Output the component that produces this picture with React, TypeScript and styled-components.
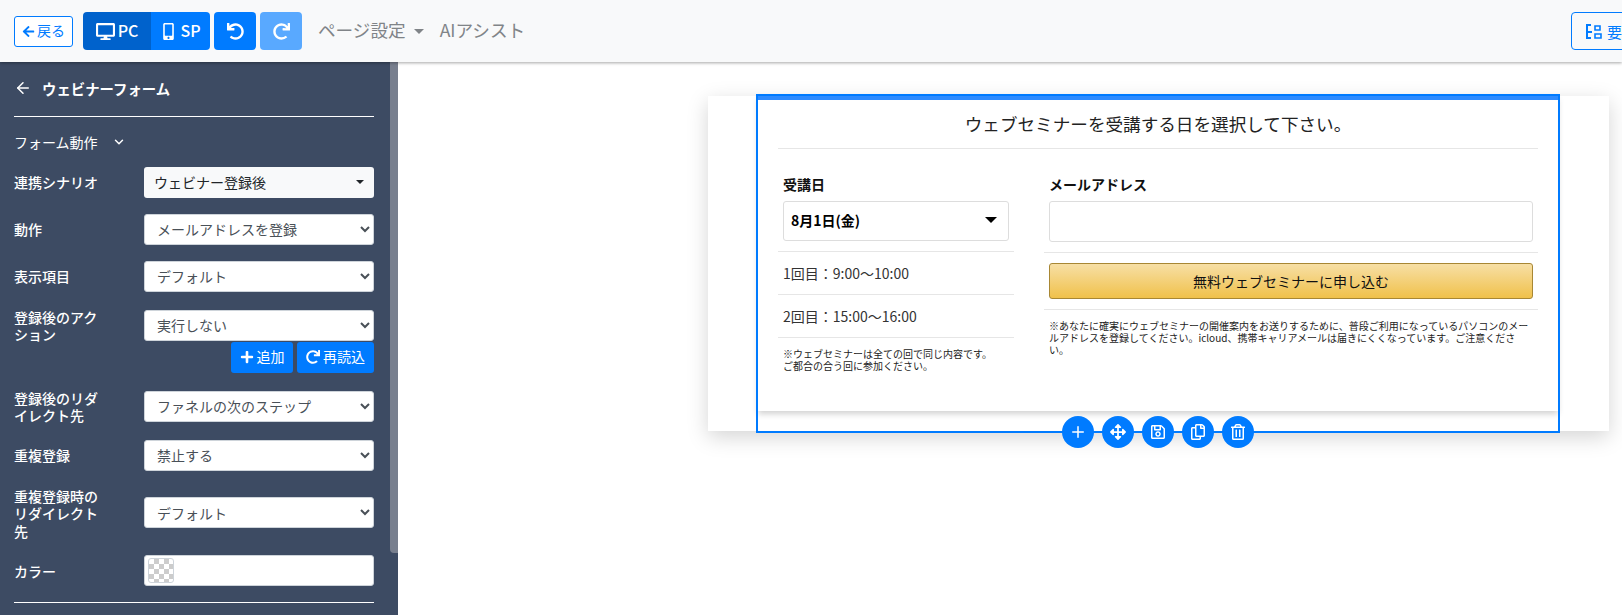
import React from 'react';
import styled, { createGlobalStyle } from 'styled-components';
import { FaArrowLeft, FaArrowsAlt, FaDesktop, FaMobileAlt, FaPlus, FaRedo, FaRegCopy, FaRegSave, FaRegTrashAlt, FaUndo } from 'react-icons/fa';
import { ArrowLeft, ChevronDown, Plus } from 'lucide-react';

const GlobalStyle = createGlobalStyle`
  html, body { margin: 0; padding: 0; height: 615px; overflow: hidden; background: #fff; }
  * { box-sizing: border-box; }
  body, button, select { font-family: "Noto Sans CJK JP", "Noto Sans", sans-serif; }
`;

const Page = styled.div`
  width: 1622px;
  height: 615px;
  overflow: hidden;
  display: flex;
  flex-direction: column;
`;

const Header = styled.header`
  height: 62px;
  flex: none;
  display: flex;
  align-items: center;
  padding-left: 14px;
  background: #f8f9fa;
  box-shadow: 0 1px 3px rgba(0, 0, 0, 0.35);
  position: relative;
  z-index: 2;
`;

const BackButton = styled.button`
  width: 59px;
  height: 31px;
  padding: 0 0 2px;
  display: flex;
  align-items: center;
  justify-content: center;
  gap: 2px;
  background: #fff;
  color: #007bff;
  border: 1px solid #007bff;
  border-radius: 3px;
  font-size: 14px;
  svg { font-size: 13px; margin-top: 2px; }
`;

const DeviceGroup = styled.div`
  display: flex;
  margin-left: 10px;
  height: 38px;
  border-radius: 4px;
  overflow: hidden;
`;

const DeviceButton = styled.button<{ $active?: boolean; $width: number }>`
  width: ${p => p.$width}px;
  padding: 0 0 3px;
  border: 0;
  display: flex;
  align-items: center;
  justify-content: center;
  gap: 3px;
  color: #fff;
  font-size: 16px;
  font-weight: 500;
  background: ${p => (p.$active ? '#0062cc' : '#007bff')};
  svg { font-size: ${p => (p.$active ? 19 : 17)}px; margin-top: 3px; }
`;

const IconButton = styled.button<{ $disabled?: boolean }>`
  width: 42px;
  height: 38px;
  margin-left: 4px;
  padding: 0;
  border: 0;
  border-radius: 4px;
  color: #fff;
  background: ${p => (p.$disabled ? '#59a9ff' : '#007bff')};
  display: flex;
  align-items: center;
  justify-content: center;
  svg { font-size: 17px; }
`;

const NavItem = styled.span<{ $left: number }>`
  margin-left: ${p => p.$left}px;
  padding-bottom: 4px;
  display: flex;
  align-items: center;
  color: #808488;
  font-size: 17.6px;
`;

const NavCaret = styled.i`
  margin: 4px 0 0 8px;
  border-top: 5px solid #808488;
  border-left: 5px solid transparent;
  border-right: 5px solid transparent;
`;

const OutlineButton = styled.button`
  margin-left: auto;
  margin-right: -40px;
  width: 91px;
  height: 38px;
  padding: 0 0 0 13px;
  display: flex;
  align-items: center;
  gap: 5px;
  background: transparent;
  color: #007bff;
  border: 1px solid #007bff;
  border-radius: 4px;
  font-size: 15px;
`;

const Main = styled.div`
  flex: 1;
  display: flex;
  min-height: 0;
`;

const Sidebar = styled.aside`
  width: 398px;
  flex: none;
  padding: 0 24px 0 14px;
  background: #3d4b63;
  color: #fff;
  position: relative;
  overflow: hidden;
`;

const ScrollThumb = styled.div`
  position: absolute;
  top: 0;
  right: 0;
  width: 8px;
  height: 491px;
  background: #787f8e;
  border-radius: 0 0 0 4px;
`;

const PanelTitle = styled.div`
  height: 55px;
  display: flex;
  align-items: center;
  gap: 10px;
  border-bottom: 1px solid #fff;
  font-size: 14.4px;
  font-weight: 700;
  padding-bottom: 2px;
`;

const SectionToggle = styled.div`
  height: 49.7px;
  display: flex;
  align-items: center;
  gap: 14px;
  font-size: 14px;
`;

const Row = styled.div<{ $top?: boolean }>`
  display: flex;
  align-items: ${p => (p.$top ? 'flex-start' : 'center')};
  margin-bottom: 16px;
`;

const FieldLabel = styled.label`
  width: 130px;
  flex: none;
  padding-right: 37px;
  font-size: 14px;
  line-height: 17.5px;
  font-weight: 500;
  transform: translateY(1px);
`;

const Control = styled.div<{ $top?: boolean }>`
  flex: 1;
  min-width: 0;
  padding-top: ${p => (p.$top ? 2 : 0)}px;
`;

const DropButton = styled.button`
  width: 100%;
  height: 31px;
  padding: 0 10px;
  display: flex;
  align-items: center;
  justify-content: space-between;
  background: #f8f9fa;
  border: 0;
  border-radius: 3px;
  color: #212529;
  font-size: 14px;
`;

const DropCaret = styled.i`
  border-top: 4px solid #212529;
  border-left: 4px solid transparent;
  border-right: 4px solid transparent;
`;

const NativeSelect = styled.select`
  display: block;
  width: 100%;
  height: 31px;
  padding: 0 8px;
  background: #fff;
  border: 1px solid #ced4da;
  border-radius: 3px;
  color: #495057;
  font-size: 14px;
`;

const ActionRow = styled.div`
  display: flex;
  justify-content: flex-end;
  gap: 4px;
  margin-top: 1px;
`;

const ActionButton = styled.button<{ $width: number }>`
  width: ${p => p.$width}px;
  height: 31px;
  padding: 0 0 2px;
  border: 0;
  border-radius: 3px;
  display: flex;
  align-items: center;
  justify-content: center;
  gap: 3px;
  background: #007bff;
  color: #fff;
  font-size: 14px;
  svg { font-size: 14px; margin-top: 2px; }
`;

const ColorField = styled.div`
  height: 31px;
  padding: 2px 3px;
  background: #fff;
  border: 1px solid #ced4da;
  border-radius: 3px;
`;

const Swatch = styled.div`
  width: 26px;
  height: 25px;
  border: 1px solid #ced4da;
  border-radius: 3px;
  background: repeating-conic-gradient(#ccc 0 25%, #fff 0 50%) 0 0 / 10px 10px;
`;

const PanelRule = styled.hr`
  margin: 16px 0 0;
  border: 0;
  border-top: 1px solid #fff;
`;

const Canvas = styled.main`
  flex: 1;
  padding: 34px 0 0 310px;
  background: #fff;
`;

const Card = styled.section`
  position: relative;
  width: 901px;
  height: 335px;
  padding: 0 51px 0 50px;
  background: #fff;
  box-shadow: 0 6px 20px rgba(0, 0, 0, 0.17);
`;

const Block = styled.div`
  height: 315px;
  padding: 0 20px;
  border-top: 4px solid #2e8bff;
  background: #fff;
  box-shadow: 0 3px 6px rgba(0, 0, 0, 0.18);
`;

const FormTitle = styled.h2`
  margin: 0;
  height: 49px;
  padding-bottom: 2px;
  border-bottom: 1px solid #e6e6e6;
  display: flex;
  align-items: center;
  justify-content: center;
  color: #222;
  font-size: 17.6px;
  font-weight: 400;
`;

const Columns = styled.div`
  display: grid;
  grid-template-columns: 236px 494px;
  column-gap: 30px;
`;

const FormLabel = styled.div`
  margin: 25px 0 0 5px;
  height: 21px;
  line-height: 21px;
  color: #111;
  font-size: 14px;
  font-weight: 700;
`;

const DateSelect = styled.div`
  margin: 6px 5px 0;
  height: 40px;
  padding: 0 11px 2px 7px;
  display: flex;
  align-items: center;
  justify-content: space-between;
  border: 1px solid #ddd;
  border-radius: 3px;
  color: #000;
  font-size: 14px;
  font-weight: 700;
`;

const DateCaret = styled.i`
  border-top: 6px solid #000;
  border-left: 6px solid transparent;
  border-right: 6px solid transparent;
`;

const SessionRow = styled.div<{ $first?: boolean }>`
  margin-top: ${p => (p.$first ? 10 : 0)}px;
  height: 43px;
  padding-left: 5px;
  display: flex;
  align-items: center;
  border-top: 1px solid #e6e6e6;
  color: #333;
  font-size: 14px;
`;

const Note = styled.p`
  margin: 0;
  padding: 10px 5px 0;
  border-top: 1px solid #e6e6e6;
  color: #222;
  font-size: 10px;
  line-height: 12px;
`;

const EmailInput = styled.div`
  margin: 6px 5px 0;
  height: 41px;
  border: 1px solid #ddd;
  border-radius: 3px;
`;

const ButtonSlot = styled.div`
  margin-top: 10px;
  padding: 10px 5px;
  border-top: 1px solid #e6e6e6;
`;

const GoldButton = styled.button`
  display: block;
  width: 100%;
  height: 36px;
  padding: 0;
  border: 1px solid #a88734;
  border-radius: 3px;
  background: linear-gradient(#f7dfa5, #f0c14b);
  color: #111;
  font-size: 14px;
`;

const SelectionFrame = styled.div`
  position: absolute;
  left: 48px;
  top: -2px;
  width: 804px;
  height: 339px;
  border: 2px solid #007bff;
  pointer-events: none;
`;

const FloatingTools = styled.div`
  position: absolute;
  left: 354px;
  top: 320px;
  display: flex;
  gap: 8px;
`;

const ToolButton = styled.button`
  width: 32px;
  height: 32px;
  padding: 0;
  border: 0;
  border-radius: 50%;
  display: flex;
  align-items: center;
  justify-content: center;
  background: #007bff;
  color: #fff;
  svg { font-size: 16px; }
`;

const selects = [
  { label: '動作', value: 'メールアドレスを登録' },
  { label: '表示項目', value: 'デフォルト' },
];

const TreeIcon = () => (
  <svg width="17" height="17" viewBox="0 0 17 17" fill="none" stroke="currentColor" strokeWidth="2">
    <path d="M2 1v15M1 2h5M2 9h5M1 15h5" />
    <path d="M10 3h5v4h-5zM10 11h6v4h-6z" strokeWidth="1.6" />
  </svg>
);

const Field: React.FC<{ label: string; value: string }> = ({ label, value }) => (
  <Row>
    <FieldLabel>{label}</FieldLabel>
    <Control>
      <NativeSelect defaultValue={value}>
        <option>{value}</option>
      </NativeSelect>
    </Control>
  </Row>
);

export default function App() {
  return (
    <Page>
      <GlobalStyle />
      <Header>
        <BackButton><FaArrowLeft />戻る</BackButton>
        <DeviceGroup>
          <DeviceButton $active $width={68}><FaDesktop />PC</DeviceButton>
          <DeviceButton $width={59}><FaMobileAlt />SP</DeviceButton>
        </DeviceGroup>
        <IconButton><FaUndo /></IconButton>
        <IconButton $disabled><FaRedo /></IconButton>
        <NavItem $left={16}>ページ設定<NavCaret /></NavItem>
        <NavItem $left={16}>AIアシスト</NavItem>
        <OutlineButton><TreeIcon />要素</OutlineButton>
      </Header>
      <Main>
        <Sidebar>
          <ScrollThumb />
          <PanelTitle><ArrowLeft size={18} strokeWidth={2} />ウェビナーフォーム</PanelTitle>
          <SectionToggle>フォーム動作<ChevronDown size={14} strokeWidth={2.5} /></SectionToggle>
          <Row>
            <FieldLabel>連携シナリオ</FieldLabel>
            <Control>
              <DropButton>ウェビナー登録後<DropCaret /></DropButton>
            </Control>
          </Row>
          {selects.map(s => <Field key={s.label} label={s.label} value={s.value} />)}
          <Row $top>
            <FieldLabel>登録後のアクション</FieldLabel>
            <Control $top>
              <NativeSelect defaultValue="実行しない"><option>実行しない</option></NativeSelect>
              <ActionRow>
                <ActionButton $width={62}><FaPlus />追加</ActionButton>
                <ActionButton $width={77}><FaRedo />再読込</ActionButton>
              </ActionRow>
            </Control>
          </Row>
          <Field label="登録後のリダイレクト先" value="ファネルの次のステップ" />
          <Field label="重複登録" value="禁止する" />
          <Field label="重複登録時のリダイレクト先" value="デフォルト" />
          <Row>
            <FieldLabel>カラー</FieldLabel>
            <Control>
              <ColorField><Swatch /></ColorField>
            </Control>
          </Row>
          <PanelRule />
        </Sidebar>
        <Canvas>
          <Card>
            <Block>
              <FormTitle>ウェブセミナーを受講する日を選択して下さい。</FormTitle>
              <Columns>
                <div>
                  <FormLabel>受講日</FormLabel>
                  <DateSelect>8月1日(金)<DateCaret /></DateSelect>
                  <SessionRow $first>1回目：9:00～10:00</SessionRow>
                  <SessionRow>2回目：15:00～16:00</SessionRow>
                  <Note>※ウェブセミナーは全ての回で同じ内容です。<br />ご都合の合う回に参加ください。</Note>
                </div>
                <div>
                  <FormLabel>メールアドレス</FormLabel>
                  <EmailInput />
                  <ButtonSlot><GoldButton>無料ウェブセミナーに申し込む</GoldButton></ButtonSlot>
                  <Note>※あなたに確実にウェブセミナーの開催案内をお送りするために、普段ご利用になっているパソコンのメールアドレスを登録してください。icloud、携帯キャリアメールは届きにくくなっています。ご注意ください。</Note>
                </div>
              </Columns>
            </Block>
            <SelectionFrame />
            <FloatingTools>
              <ToolButton><Plus size={18} strokeWidth={2} /></ToolButton>
              <ToolButton><FaArrowsAlt /></ToolButton>
              <ToolButton><FaRegSave /></ToolButton>
              <ToolButton><FaRegCopy /></ToolButton>
              <ToolButton><FaRegTrashAlt /></ToolButton>
            </FloatingTools>
          </Card>
        </Canvas>
      </Main>
    </Page>
  );
}
